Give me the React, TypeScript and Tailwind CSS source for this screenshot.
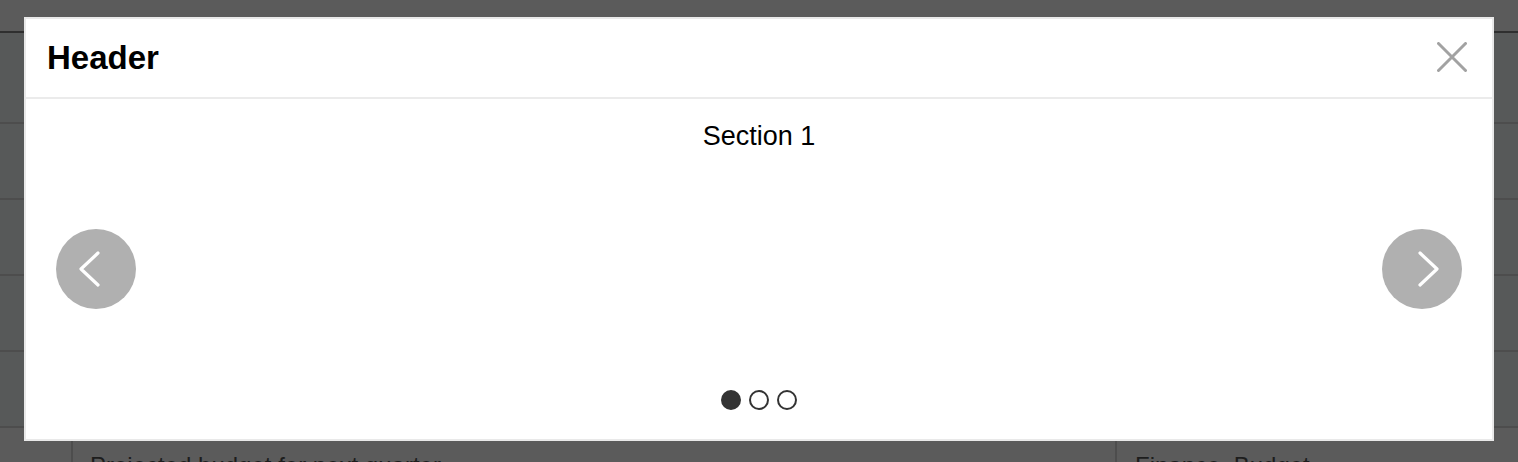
import { useState } from "react";

const rows = [
  { h: "h-[91px]" },
  { h: "h-[76px]" },
  { h: "h-[76px]" },
  { h: "h-[76px]" },
  { h: "h-[76px]" },
];

function Chevron({ dir }: { dir: "left" | "right" }) {
  const pts = dir === "left" ? "42,24 25,40 42,56" : "38,24 55,40 38,56";
  return (
    <button className="w-[80px] h-[80px] rounded-full bg-[#b0b0b0] shrink-0 flex items-center justify-center">
      <svg width="80" height="80" viewBox="0 0 80 80" fill="none">
        <polyline points={pts} stroke="#fff" strokeWidth="3.2" strokeLinecap="round" strokeLinejoin="round" />
      </svg>
    </button>
  );
}

export default function App() {
  const [active, setActive] = useState(0);

  return (
    <div className="relative w-full h-[462px] overflow-hidden bg-[#5b5b5b] font-['Liberation_Sans',Arial,sans-serif]">
      {/* table behind the overlay */}
      <div className="flex flex-col">
        <div className="h-[33px] border-b-2 border-[#2f2f2f]" />
        {rows.map((r, i) => (
          <div key={i} className={`${r.h} border-b-2 border-[#4d4d4d] bg-[#575959]`} />
        ))}
        <div className="flex h-[40px]">
          <div className="w-[73px] border-r-2 border-[#4d4d4d]" />
          <div className="w-[1044px] border-r-2 border-[#4d4d4d] pl-[17px] pt-[24px] text-[24px] leading-[28px] text-[#1d1d1d]">
            Projected budget for next quarter
          </div>
          <div className="flex-1 pl-[18px] pt-[24px] text-[24px] leading-[28px] text-[#1d1d1d]">Finance, Budget</div>
        </div>
      </div>

      {/* modal */}
      <div className="absolute left-[24px] top-[17px] w-[1470px] h-[424px] bg-white border-2 border-[#e9e9e9] flex flex-col">
        <div className="h-[80px] border-b-2 border-[#ebebeb] flex items-center justify-between pl-[21px] pr-[25px] pb-[2px] shrink-0">
          <h2 className="text-[33px] font-bold text-black leading-none">Header</h2>
          <button className="w-[30px] h-[30px]">
            <svg width="30" height="30" viewBox="0 0 30 30" fill="none">
              <path d="M1.5 1.5 L28.5 28.5 M28.5 1.5 L1.5 28.5" stroke="#a2a2a2" strokeWidth="3" strokeLinecap="round" />
            </svg>
          </button>
        </div>

        <div className="flex-1 flex items-center px-[30px]">
          <Chevron dir="left" />
          <div className="flex-1 h-full flex flex-col items-center justify-between pt-[22px] pb-[29px]">
            <p className="text-[27px] leading-[30px] text-black">Section {active + 1}</p>
            <div className="flex gap-[8px]">
              {[0, 1, 2].map((d) => (
                <button
                  key={d}
                  onClick={() => setActive(d)}
                  className={`w-[20px] h-[20px] rounded-full border-2 border-[#333] ${
                    d === active ? "bg-[#333]" : "bg-white"
                  }`}
                />
              ))}
            </div>
          </div>
          <Chevron dir="right" />
        </div>
      </div>
    </div>
  );
}
